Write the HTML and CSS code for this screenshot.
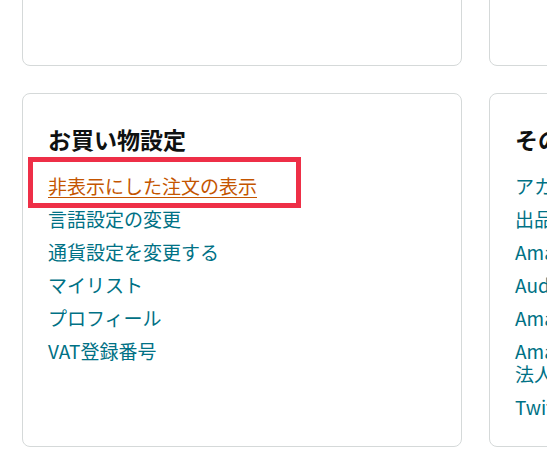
FILE: index.html
```html
<!doctype html>
<html lang="ja">
<head>
  <meta charset="utf-8">
  <title>アカウントサービス</title>
  <link rel="stylesheet" href="styles.css">
</head>
<body>
<div class="boxes">
	<div class="box box-top"></div>
	<div class="box box-top"></div>

	<div class="box">
		<h2 class="box-title">お買い物設定</h2>
		<ul class="box-list">
			<li class="marked">
				<a class="link link-active" href="#">非表示にした注文の表示</a>
				<span class="mark"></span>
			</li>
			<li><a class="link" href="#">言語設定の変更</a></li>
			<li><a class="link" href="#">通貨設定を変更する</a></li>
			<li><a class="link" href="#">マイリスト</a></li>
			<li><a class="link" href="#">プロフィール</a></li>
			<li><a class="link" href="#">VAT登録番号</a></li>
		</ul>
	</div>

	<div class="box">
		<h2 class="box-title">その他のプログラム</h2>
		<ul class="box-list">
			<li><a class="link" href="#">アカウントのリンク</a></li>
			<li><a class="link" href="#">出品用アカウント</a></li>
			<li><a class="link" href="#">Amazonアソシエイト</a></li>
			<li><a class="link" href="#">Audible</a></li>
			<li><a class="link" href="#">Amazon Pay</a></li>
			<li><a class="link" href="#">Amazonビジネスアカウントを作成<br>法人・個人事業主向け</a></li>
			<li><a class="link" href="#">Twitch Prime</a></li>
		</ul>
	</div>
</div>
</body>
</html>
```

FILE: styles.css
```css
*,
*:before,
*:after {
	box-sizing: border-box;
}

html,
body {
	overflow: hidden;
}

body {
	margin: 0;
	background-color: #fff;
	font-family: "Noto Sans CJK JP", "Noto Sans", sans-serif;
	color: #0f1111;
}

.boxes {
	display: grid;
	grid-template-columns: 440px 440px;
	column-gap: 27px;
	row-gap: 27px;
	margin-top: -150px;
	padding-left: 22px;
	width: 1000px;
}

.box {
	height: 354px;
	padding: 29px 25px 0 25px;
	border: 1px solid #d5d9d9;
	border-radius: 8px;
}

.box-top {
	height: 216px;
}

.box-title {
	margin: 0 0 19px 0;
	font-size: 23px;
	font-weight: 700;
	line-height: 32px;
}

.box-list {
	margin: 0;
	padding: 0;
	list-style: none;
	font-size: 19px;
	line-height: 23px;
}

.box-list li {
	margin-bottom: 10px;
}

.link {
	color: #007185;
	text-decoration: none;
}

.link-active {
	color: #c45500;
	text-decoration: underline;
	text-underline-offset: 3px;
}

.marked {
	position: relative;
}

.mark {
	position: absolute;
	top: -17px;
	left: -20px;
	width: 273px;
	height: 51px;
	border: 5px solid #ee2f47;
}
```
